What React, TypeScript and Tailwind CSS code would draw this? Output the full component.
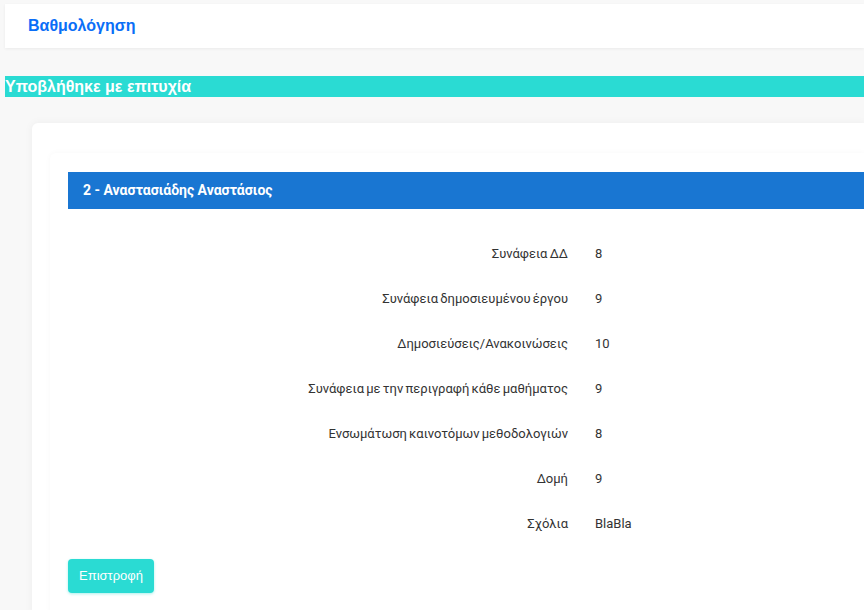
import React from "react";

const rows: [string, string][] = [
  ["Συνάφεια ΔΔ", "8"],
  ["Συνάφεια δημοσιευμένου έργου", "9"],
  ["Δημοσιεύσεις/Ανακοινώσεις", "10"],
  ["Συνάφεια με την περιγραφή κάθε μαθήματος", "9"],
  ["Ενσωμάτωση καινοτόμων μεθοδολογιών", "8"],
  ["Δομή", "9"],
  ["Σχόλια", "BlaBla"],
];

export default function App() {
  return (
    <div className="min-h-screen h-[610px] overflow-hidden bg-[#f8f8f8] pt-[4px] pl-[5px]">
      <div className="h-[44px] bg-white shadow-[0_1px_3px_rgba(0,0,0,0.06)] flex items-center pl-[23px]">
        <span className="text-[16px] font-bold text-[#0a6ef7] font-['Liberation_Sans',Arial,sans-serif]">
          Βαθμολόγηση
        </span>
      </div>
      <div className="mt-[28px] h-[21px] bg-[#2adbd3] flex items-center">
        <span className="text-[16px] font-bold text-white font-['Liberation_Sans',Arial,sans-serif] leading-none">
          Υποβλήθηκε με επιτυχία
        </span>
      </div>
      <div className="pl-[27px] pt-[26px]">
        <div className="bg-white rounded-tl-md shadow-[0_0_8px_rgba(0,0,0,0.05)] pl-[18px] pt-[30px]">
          <div className="bg-white rounded-tl-md shadow-[0_0_6px_rgba(0,0,0,0.03)] pl-[18px] pt-[19px] pb-[20px]">
            <div className="h-[37px] bg-[#1976d2] flex items-center pl-[15px]">
              <span className="text-[14px] font-bold text-white font-['Roboto',sans-serif]">
                2 - Αναστασιάδης Αναστάσιος
              </span>
            </div>
            <div className="pt-[22px] font-['Roboto',sans-serif] text-[13px] text-[#333]">
              {rows.map(([label, value]) => (
                <div key={label} className="h-[45px] flex items-center">
                  <div className="w-[500px] text-right [word-spacing:-1px]">{label}</div>
                  <div className="ml-[27px]">{value}</div>
                </div>
              ))}
            </div>
            <button className="mt-[13px] h-[34px] w-[86px] rounded bg-[#2adbd3] text-white text-[13px] font-['Liberation_Sans',Arial,sans-serif] shadow-[0_1px_3px_rgba(42,219,211,0.4)]">
              Επιστροφή
            </button>
          </div>
        </div>
      </div>
    </div>
  );
}
